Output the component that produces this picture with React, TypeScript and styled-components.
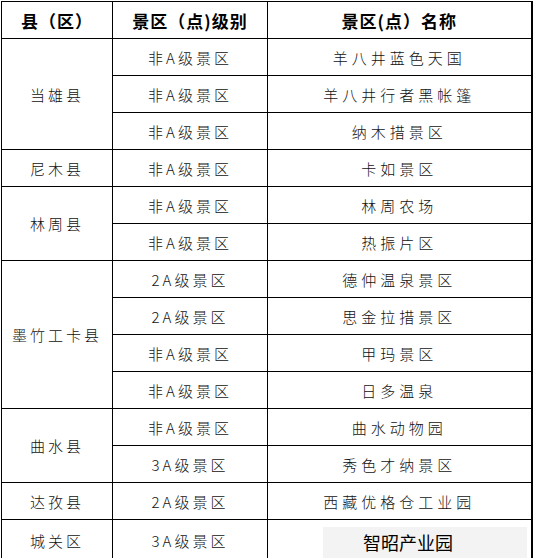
import React, { FC } from 'react'
import styled, { createGlobalStyle } from 'styled-components'

const GlobalStyle = createGlobalStyle`
  html, body {
    margin: 0;
    padding: 0;
    background: #ffffff;
  }
  body {
    font-family: "Noto Sans CJK SC", "Noto Sans", sans-serif;
    color: #111111;
  }
`

const Root = styled.div`
  padding: 1px 0 0 1px;
`

const Table = styled.table`
  width: 530px;
  border-collapse: collapse;
  table-layout: fixed;
  border-right: 2px solid #000;
  border-bottom: 2px solid #000;
`

const Col = styled.col<{ $w: number }>`
  width: ${(p) => p.$w}px;
`

const HeadCell = styled.th`
  height: 36px;
  padding: 0;
  border: 1px solid #000;
  font-size: 17px;
  font-weight: 700;
  letter-spacing: 1px;
  text-align: center;
  vertical-align: middle;
  color: #000;
`

const Cell = styled.td<{ $spaced?: number }>`
  height: 36px;
  padding: 0;
  border: 1px solid #000;
  font-size: 15px;
  font-weight: 300;
  letter-spacing: ${(p) => p.$spaced ?? 4}px;
  text-align: center;
  vertical-align: middle;
  line-height: 1;
`

const ShadedCell = styled.td`
  height: 36px;
  padding: 4px 4px 1px 55px;
  border: 1px solid #000;
  vertical-align: middle;
`

const Shade = styled.div`
  height: 31px;
  display: flex;
  align-items: center;
  padding-left: 40px;
  background: #f3f3f3;
  font-size: 18px;
  font-weight: 400;
  color: #000;
`

interface Row {
  county?: string
  span?: number
  level: string
  name: string
}

const rows: Row[] = [
  { county: '当雄县', span: 3, level: '非A级景区', name: '羊八井蓝色天国' },
  { level: '非A级景区', name: '羊八井行者黑帐篷' },
  { level: '非A级景区', name: '纳木措景区' },
  { county: '尼木县', span: 1, level: '非A级景区', name: '卡如景区' },
  { county: '林周县', span: 2, level: '非A级景区', name: '林周农场' },
  { level: '非A级景区', name: '热振片区' },
  { county: '墨竹工卡县', span: 4, level: '2A级景区', name: '德仲温泉景区' },
  { level: '2A级景区', name: '思金拉措景区' },
  { level: '非A级景区', name: '甲玛景区' },
  { level: '非A级景区', name: '日多温泉' },
  { county: '曲水县', span: 2, level: '非A级景区', name: '曲水动物园' },
  { level: '3A级景区', name: '秀色才纳景区' },
  { county: '达孜县', span: 1, level: '2A级景区', name: '西藏优格仓工业园' },
]

const App: FC = () => (
  <Root>
    <GlobalStyle />
    <Table>
      <colgroup>
        <Col $w={111} />
        <Col $w={155} />
        <Col $w={264} />
      </colgroup>
      <thead>
        <tr>
          <HeadCell>县（区）</HeadCell>
          <HeadCell>景区（点)级别</HeadCell>
          <HeadCell>景区(点）名称</HeadCell>
        </tr>
      </thead>
      <tbody>
        {rows.map((r, i) => (
          <tr key={i}>
            {r.county && (
              <Cell rowSpan={r.span} $spaced={3}>
                {r.county}
              </Cell>
            )}
            <Cell $spaced={3}>{r.level}</Cell>
            <Cell>{r.name}</Cell>
          </tr>
        ))}
        <tr>
          <Cell $spaced={3}>城关区</Cell>
          <Cell $spaced={3}>3A级景区</Cell>
          <ShadedCell>
            <Shade>智昭产业园</Shade>
          </ShadedCell>
        </tr>
      </tbody>
    </Table>
  </Root>
)

export default App
